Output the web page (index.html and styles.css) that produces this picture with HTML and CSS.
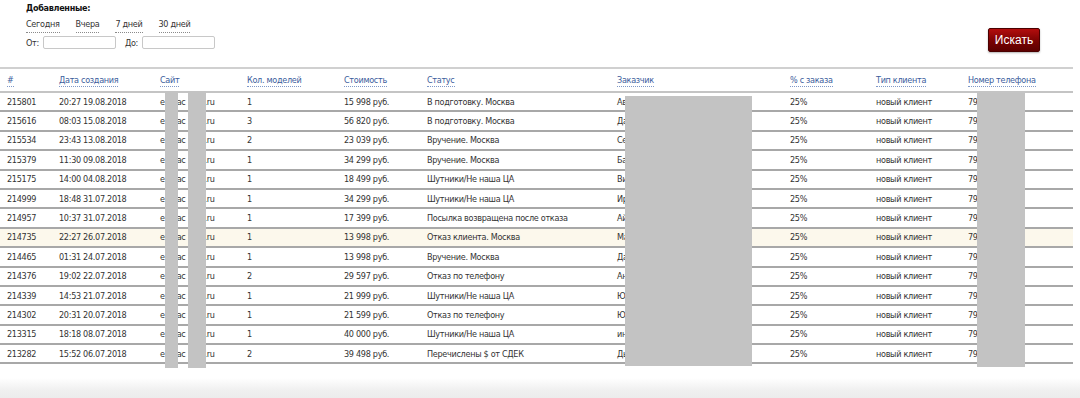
FILE: index.html
```html
<!DOCTYPE html>
<html lang="ru">
<head>
    <meta charset="UTF-8">
    <title>Заказы</title>
    <link rel="stylesheet" href="styles.css">
</head>
<body>
    <div class="filter">
        <div class="filter-left">
            <div class="filter-title">Добавленные:</div>
            <div class="quick-links">
                <a class="dotted">Сегодня</a>
                <a class="dotted">Вчера</a>
                <a class="dotted">7 дней</a>
                <a class="dotted">30 дней</a>
            </div>
            <div class="dates">
                <label>От:</label><input type="text" class="date-input">
                <label>До:</label><input type="text" class="date-input">
            </div>
        </div>
        <button class="search-btn">Искать</button>
    </div>

    <div class="table-wrap">
        <table class="orders">
            <thead>
                <tr>
                    <th class="c-id"><span class="dotted">#</span></th>
                    <th class="c-date"><span class="dotted">Дата создания</span></th>
                    <th class="c-site"><span class="dotted">Сайт</span></th>
                    <th class="c-qty"><span class="dotted">Кол. моделей</span></th>
                    <th class="c-price"><span class="dotted">Стоимость</span></th>
                    <th class="c-status"><span class="dotted">Статус</span></th>
                    <th class="c-client"><span class="dotted">Заказчик</span></th>
                    <th class="c-pct"><span class="dotted">% с заказа</span></th>
                    <th class="c-type"><span class="dotted">Тип клиента</span></th>
                    <th class="c-phone"><span class="dotted">Номер телефона</span></th>
                </tr>
            </thead>
            <tbody id="rows"></tbody>
        </table>
        <div class="mask mask-site1"></div>
        <div class="mask mask-site2"></div>
        <div class="mask mask-client"></div>
        <div class="mask mask-phone"></div>
    </div>

    <div class="bottom-shade"></div>

    <script>
        const orders = [
            ['215801', '20:27 19.08.2018', '1', '15 998 руб.', 'В подготовку. Москва', 'Ав'],
            ['215616', '08:03 15.08.2018', '3', '56 820 руб.', 'В подготовку. Москва', 'Да'],
            ['215534', '23:43 13.08.2018', '2', '23 039 руб.', 'Вручение. Москва', 'Се'],
            ['215379', '11:30 09.08.2018', '1', '34 299 руб.', 'Вручение. Москва', 'Ба'],
            ['215175', '14:00 04.08.2018', '1', '18 499 руб.', 'Шутники/Не наша ЦА', 'Ви'],
            ['214999', '18:48 31.07.2018', '1', '34 299 руб.', 'Шутники/Не наша ЦА', 'Ир'],
            ['214957', '10:37 31.07.2018', '1', '17 399 руб.', 'Посылка возвращена после отказа', 'Ай'],
            ['214735', '22:27 26.07.2018', '1', '13 998 руб.', 'Отказ клиента. Москва', 'Ма', true],
            ['214465', '01:31 24.07.2018', '1', '13 998 руб.', 'Вручение. Москва', 'Да'],
            ['214376', '19:02 22.07.2018', '2', '29 597 руб.', 'Отказ по телефону', 'Ан'],
            ['214339', '14:53 21.07.2018', '1', '21 999 руб.', 'Шутники/Не наша ЦА', 'Ю'],
            ['214302', '20:31 20.07.2018', '1', '21 599 руб.', 'Отказ по телефону', 'Ю'],
            ['213315', '18:18 08.07.2018', '1', '40 000 руб.', 'Шутники/Не наша ЦА', 'ин'],
            ['213282', '15:52 06.07.2018', '2', '39 498 руб.', 'Перечислены $ от СДЕК', 'Дь']
        ];

        document.getElementById('rows').innerHTML = orders.map(o => `
            <tr${o[6] ? ' class="marked"' : ''}>
                <td>${o[0]}</td>
                <td>${o[1]}</td>
                <td>e<span class="gap1"></span>ac<span class="gap2"></span>.ru</td>
                <td>${o[2]}</td>
                <td>${o[3]}</td>
                <td>${o[4]}</td>
                <td>${o[5]}</td>
                <td>25%</td>
                <td>новый клиент</td>
                <td>79</td>
            </tr>
        `).join('');
    </script>
</body>
</html>
```

FILE: styles.css
```css
body {
    margin: 0;
    font-family: "DejaVu Sans Condensed", "DejaVu Sans", sans-serif;
    font-size: 9px;
    letter-spacing: -0.3px;
    color: #333;
    background: #fff;
}
.filter {
    display: flex;
    justify-content: space-between;
    align-items: flex-start;
    width: 1073px;
    height: 67px;
    box-sizing: border-box;
    padding: 2px 33px 0 26px;
}
.filter-title {
    font-weight: bold;
    color: #111;
    line-height: 13px;
}
.quick-links {
    display: flex;
    gap: 16px;
    margin-top: 3px;
    line-height: 13px;
}
.quick-links a {
    color: #333;
}
.dotted {
    border-bottom: 1px dotted #8a8a8a;
    padding-bottom: 1px;
}
.dates {
    display: flex;
    align-items: center;
    margin-top: 3px;
}
.dates label {
    margin-right: 4px;
}
.date-input {
    width: 73px;
    height: 13px;
    box-sizing: border-box;
    border: 1px solid #c8c8c8;
    border-radius: 2px;
    margin: 0 9px 0 0;
    padding: 0;
}
.search-btn {
    margin-top: 26px;
    width: 52px;
    height: 24px;
    border: 1px solid #4a0000;
    border-radius: 2px;
    background: linear-gradient(#b30d0d, #7a0202 55%, #5c0000);
    color: #fff;
    font-family: "Liberation Sans", Arial, sans-serif;
    font-size: 12px;
    letter-spacing: 0;
    padding: 0;
    box-shadow: 0 1px 2px rgba(0,0,0,0.3);
}
.table-wrap {
    position: relative;
    width: 1073px;
}
.orders {
    width: 1073px;
    border-collapse: collapse;
    border-top: 2px solid #d0d0d0;
    table-layout: fixed;
}
.orders th {
    text-align: left;
    font-weight: normal;
    color: #3b5c9c;
    height: 22px;
    padding: 0 0 0 7px;
    border-bottom: 2px solid #c4c4c4;
}
.orders th .dotted {
    border-bottom-color: #7f98c8;
}
.orders td {
    height: 17.4px;
    padding: 0 0 0 7px;
    border-bottom: 2px solid #a8a8a8;
    white-space: nowrap;
}
.orders tr.marked td {
    background: #fcf8ec;
}
.gap1 {
    display: inline-block;
    width: 12px;
}
.gap2 {
    display: inline-block;
    width: 19px;
}
.c-id { width: 45px; }
.c-date { width: 94px; }
.c-site { width: 80px; }
.c-qty { width: 90px; }
.c-price { width: 76px; }
.c-status { width: 183px; }
.c-client { width: 166px; }
.c-pct { width: 79px; }
.c-type { width: 85px; }
.mask {
    position: absolute;
    background: #c3c3c3;
}
.mask-site1 { left: 165px; top: 24px; width: 13px; height: 277px; }
.mask-site2 { left: 188px; top: 24px; width: 18px; height: 277px; }
.mask-client { left: 625px; top: 29px; width: 127px; height: 270px; }
.mask-phone { left: 977px; top: 26px; width: 48px; height: 274px; }
.bottom-shade {
    height: 20px;
    margin-top: 14px;
    background: linear-gradient(#fff, #f0f0f0 60%, #ececec);
}
```
